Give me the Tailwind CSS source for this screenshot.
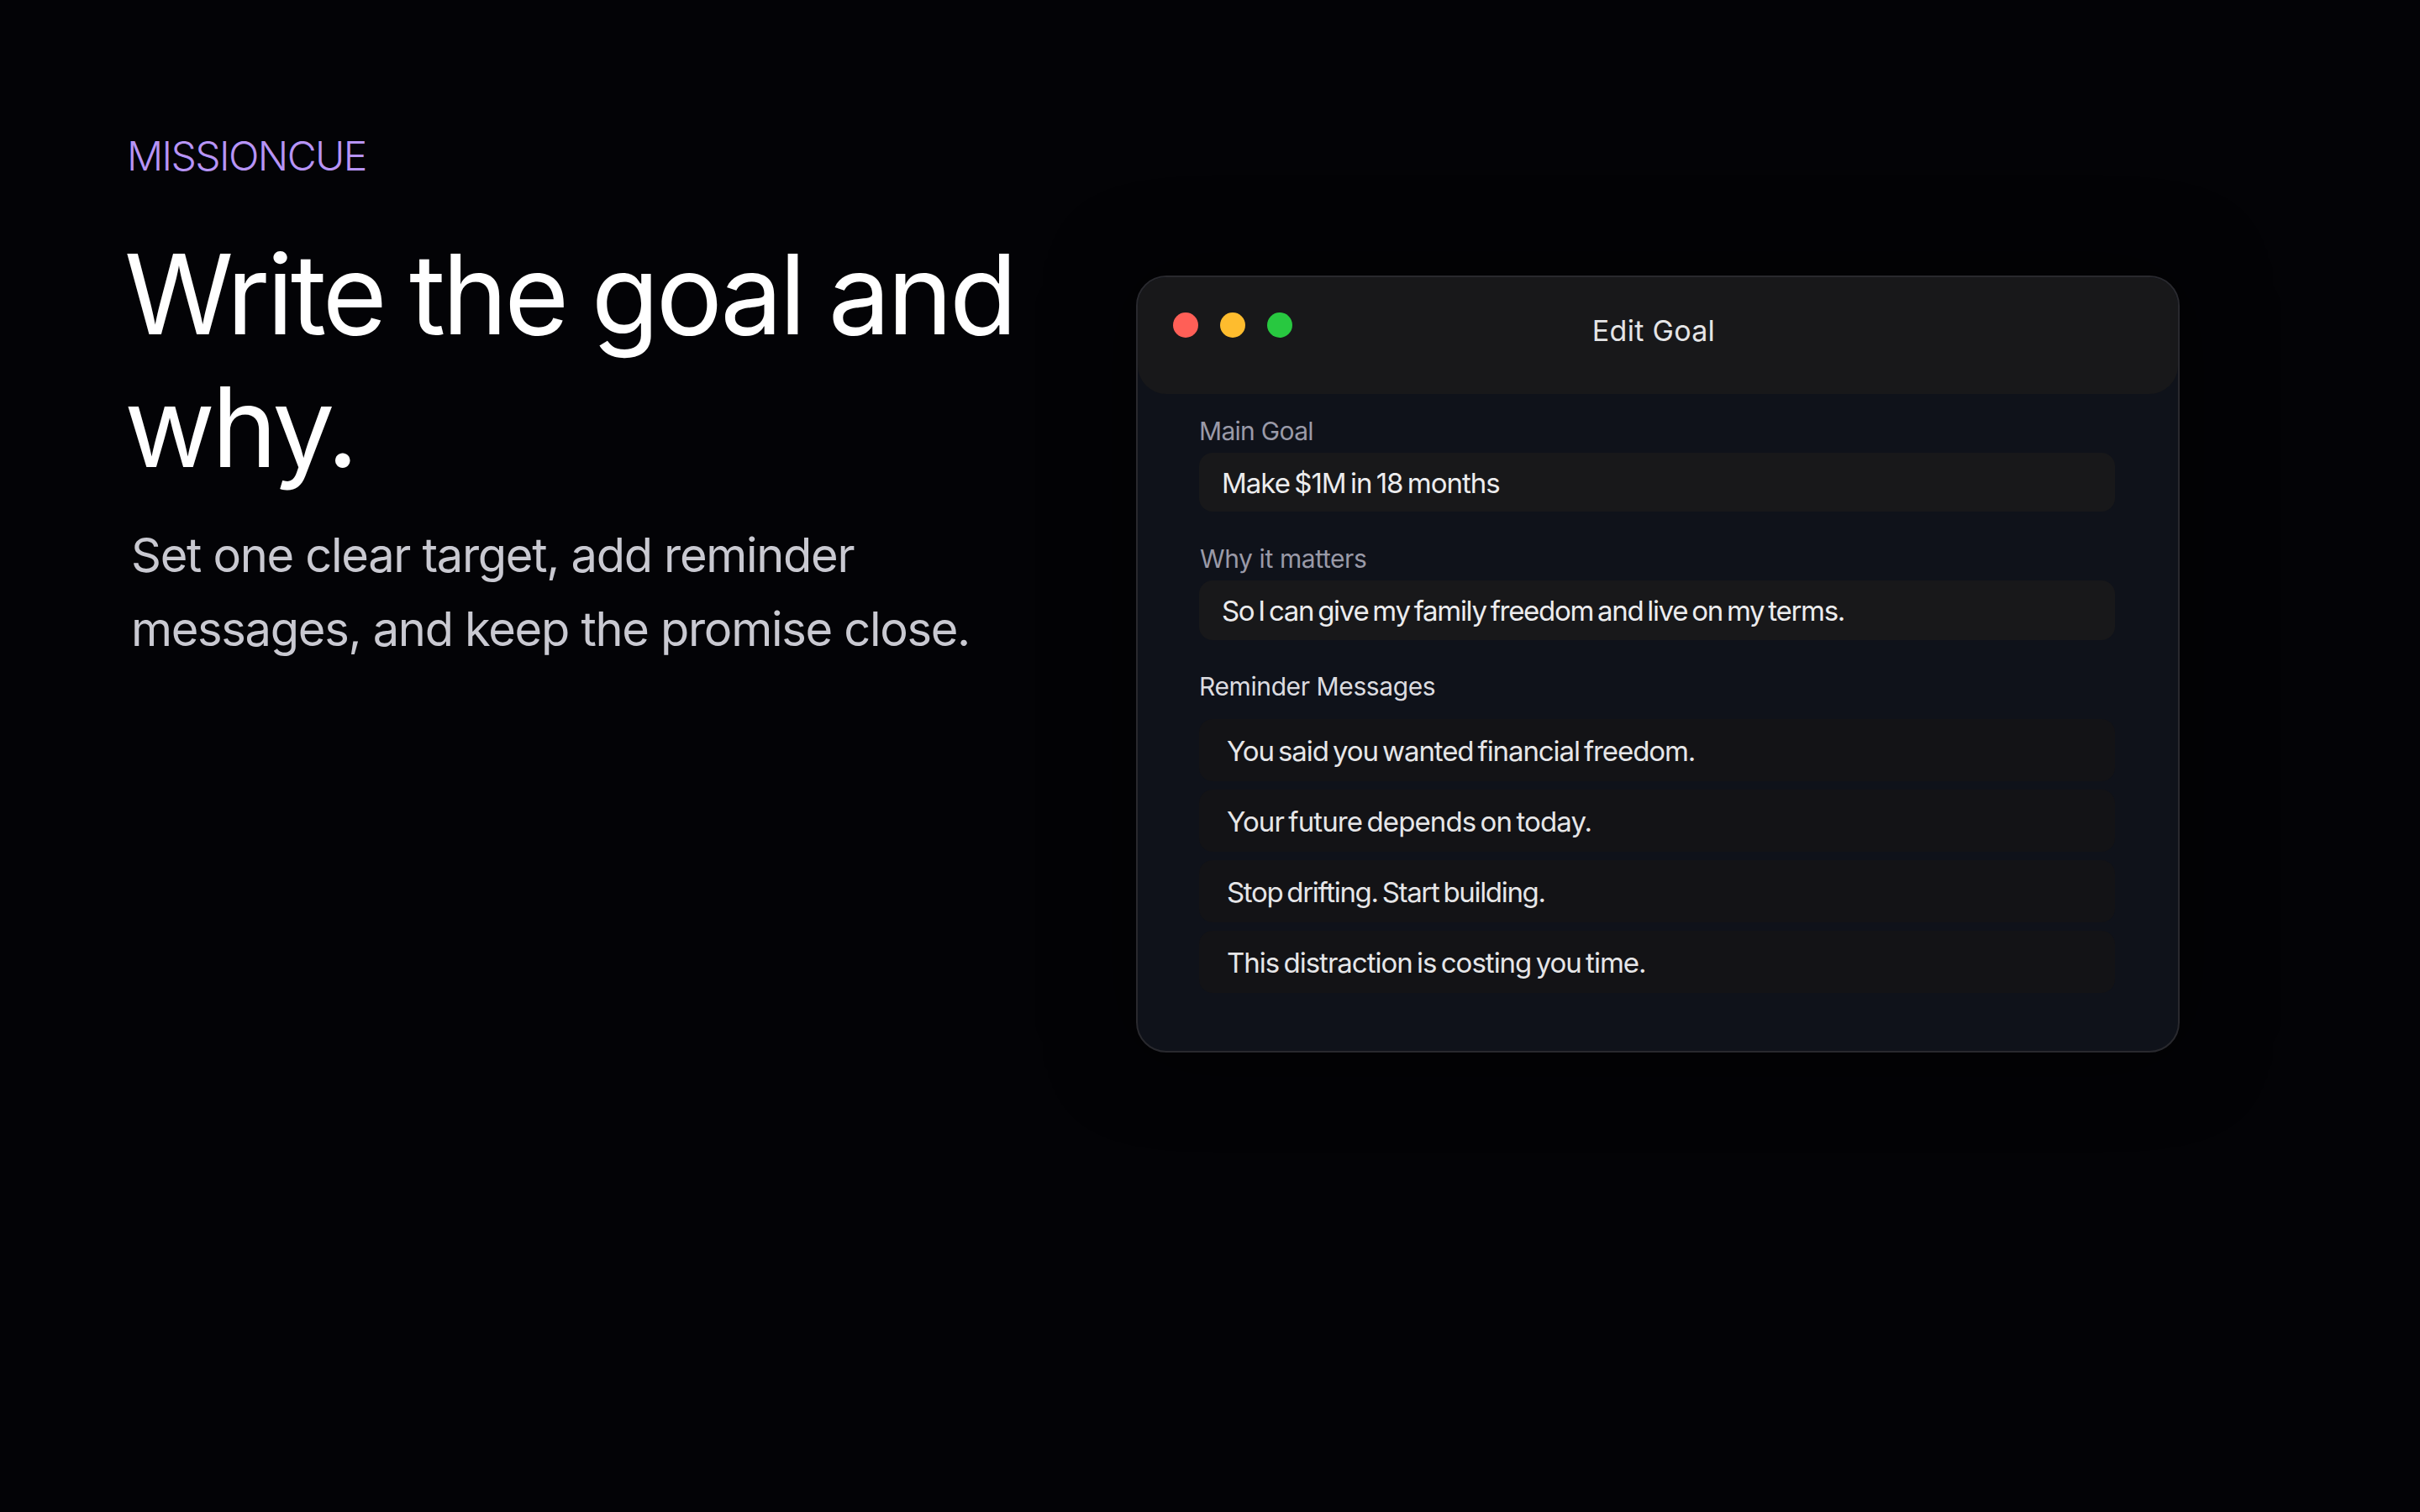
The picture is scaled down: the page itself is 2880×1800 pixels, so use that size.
<!DOCTYPE html>
<html lang="en">
<head>
  <meta charset="UTF-8" />
  <title>MissionCue</title>
  <script src="https://cdn.jsdelivr.net/npm/@tailwindcss/browser@4"></script>
</head>
<body class="bg-[#030306] font-['Inter',sans-serif]">
  <div class="w-[2880px] h-[1800px] overflow-hidden flex items-start pl-[150px]">

    <!-- Left copy -->
    <div class="w-[1202px] shrink-0 pt-[157px]">
      <div class="text-[48px] leading-[58px] font-light text-[#b794f6] tracking-[-1.6px] ml-[1px]">MISSIONCUE</div>
      <h1 class="text-[132px] leading-[158px] font-[370] text-white tracking-[-3.9px] [word-spacing:-3px] mt-[56px] -ml-[2px]">Write the goal and<br />why.</h1>
      <p class="text-[56px] leading-[88px] font-normal text-[#c9c9d1] tracking-[-1.3px] ml-[6px] mt-[30px]">Set one clear target, add reminder<br />messages, and keep the promise close.</p>
    </div>

    <!-- Edit Goal window -->
    <div class="w-[1242px] h-[925px] shrink-0 mt-[328px] rounded-[36px] bg-[#0f121a] border-2 border-[#29292e] shadow-[0_0_100px_rgba(0,0,0,0.6)] overflow-hidden">
      <div class="relative h-[139px] rounded-[34px] bg-[#18181a] flex items-start justify-center">
        <div class="absolute left-[42px] top-[42px] flex gap-[26px]">
          <span class="w-[30px] h-[30px] rounded-full bg-[#ff5f57]"></span>
          <span class="w-[30px] h-[30px] rounded-full bg-[#febc2e]"></span>
          <span class="w-[30px] h-[30px] rounded-full bg-[#28c840]"></span>
        </div>
        <div class="mt-[43px] text-[34px] leading-[42px] text-[#e4e4e6] tracking-[0.3px] -translate-x-[5px]">Edit Goal</div>
      </div>

      <div class="pl-[73px] pr-[75px]">
        <div class="mt-[24px] text-[30px] leading-[40px] text-[#9a9aa8] tracking-[-0.7px]">Main Goal</div>
        <div class="mt-[6px] h-[70px] rounded-[16px] bg-[#18181a] pl-[27px] pt-[4px] flex items-center text-[33px] text-[#ececee] tracking-[-1px] [word-spacing:-3px]">Make $1M in 18 months</div>

        <div class="mt-[36px] ml-[1px] text-[30px] leading-[40px] text-[#9a9aa8] tracking-[-0.4px]">Why it matters</div>
        <div class="mt-[6px] h-[71px] rounded-[16px] bg-[#18181a] pl-[27px] pt-[3px] flex items-center text-[33px] text-[#ececee] tracking-[-1.3px] [word-spacing:-3px]">So I can give my family freedom and live on my terms.</div>

        <div class="mt-[35px] text-[30px] leading-[40px] text-[#dcdce0] tracking-[-0.4px]">Reminder Messages</div>

        <div class="mt-[19px] flex flex-col gap-[10px] text-[33px] text-[#e6e6e8] [word-spacing:-3px]">
          <div class="h-[74px] rounded-[16px] bg-[#131316] pl-[33px] pt-[4px] flex items-center tracking-[-1.1px]">You said you wanted financial freedom.</div>
          <div class="h-[74px] rounded-[16px] bg-[#131316] pl-[33px] pt-[4px] flex items-center tracking-[-0.9px]">Your future depends on today.</div>
          <div class="h-[74px] rounded-[16px] bg-[#131316] pl-[33px] pt-[4px] flex items-center tracking-[-1.32px]">Stop drifting. Start building.</div>
          <div class="h-[74px] rounded-[16px] bg-[#131316] pl-[33px] pt-[4px] flex items-center tracking-[-1px]">This distraction is costing you time.</div>
        </div>
      </div>
    </div>
  </div>
</body>
</html>
